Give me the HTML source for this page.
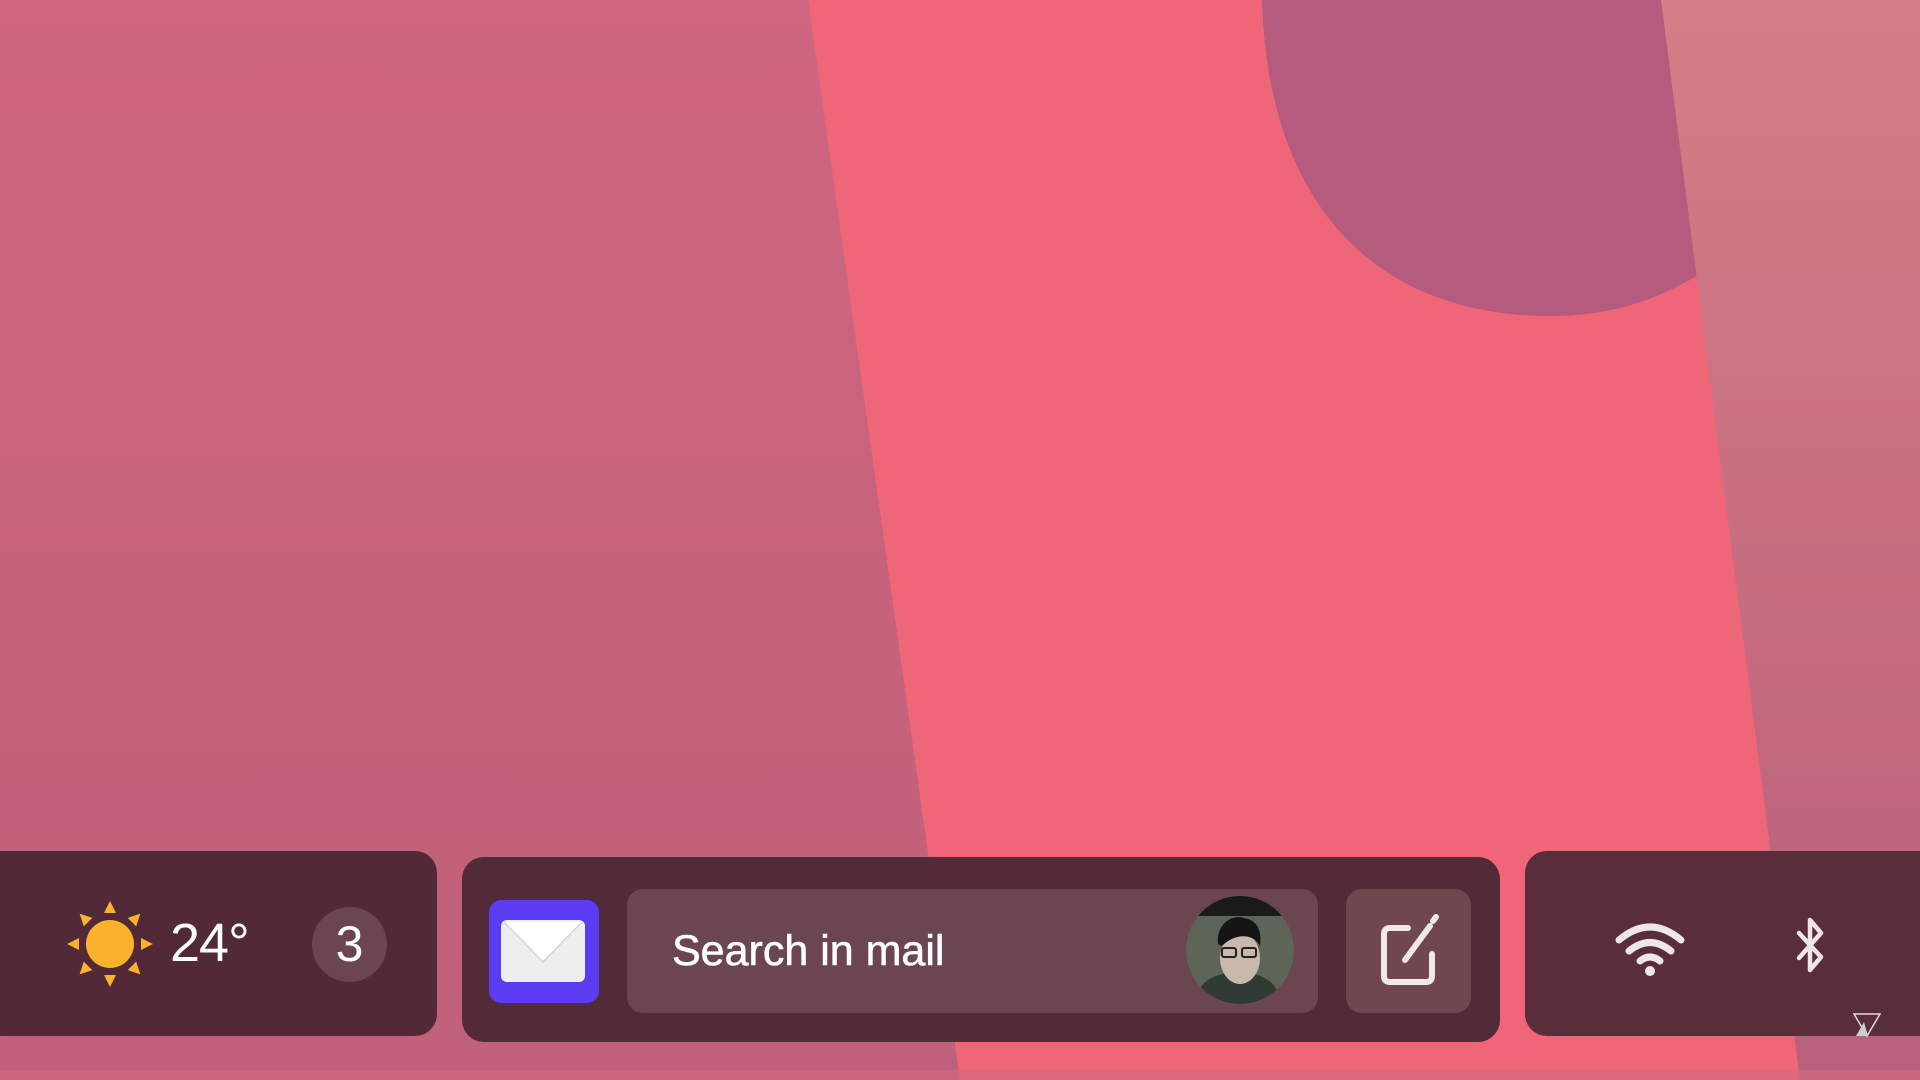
<!DOCTYPE html>
<html><head><meta charset="utf-8"><style>
html,body{margin:0;padding:0;width:1920px;height:1080px;overflow:hidden;font-family:"Liberation Sans",sans-serif}
.abs{position:absolute}
.panel{position:absolute;border-radius:22px}
</style></head><body>
<svg class="abs" style="left:0;top:0" width="1920" height="1080">
<defs>
<linearGradient id="lg" x1="0" y1="0" x2="0" y2="1"><stop offset="0" stop-color="#cf6580"/><stop offset="1" stop-color="#c0607a"/></linearGradient>
<linearGradient id="rg" x1="0" y1="0" x2="0" y2="1"><stop offset="0" stop-color="#d47f85"/><stop offset="0.6" stop-color="#c46b80"/><stop offset="1" stop-color="#b75f7c"/></linearGradient>
<clipPath id="band"><polygon points="808,0 1661,0 1800,1080 960,1080"/></clipPath>
</defs>
<rect width="1920" height="1080" fill="url(#lg)"/>
<rect x="1600" width="320" height="1080" fill="url(#rg)"/>
<polygon points="808,0 1661,0 1800,1080 960,1080" fill="#ee6678"/>
<g clip-path="url(#band)">
<path d="M1262 0 C1268 210 1380 316 1550 316 C1640 316 1700 280 1760 230 L1760 0 Z" fill="#b55b7d"/>
</g>
<rect x="0" y="1070" width="1920" height="10" fill="#d46a80" opacity="0.6"/>
</svg>

<div class="panel" style="left:-20px;top:851px;width:457px;height:185px;background:#522a37"></div>
<div class="panel" style="left:462px;top:857px;width:1038px;height:185px;background:#532a37"></div>
<div class="panel" style="left:1525px;top:851px;width:420px;height:185px;background:#5a2d3a"></div>

<!-- sun -->
<svg class="abs" style="left:66px;top:900px" width="88" height="88" viewBox="-44 -44 88 88">
<circle r="24" fill="#fbb12c"/>
<g fill="#fbb12c">
<polygon points="-6,-31 6,-31 0,-43"/>
<polygon points="-6,31 6,31 0,43"/>
<polygon points="-31,-6 -31,6 -43,0"/>
<polygon points="31,-6 31,6 43,0"/>
<g transform="rotate(45)"><polygon points="-6,-31 6,-31 0,-43"/><polygon points="-6,31 6,31 0,43"/><polygon points="-31,-6 -31,6 -43,0"/><polygon points="31,-6 31,6 43,0"/></g>
</g>
</svg>
<div class="abs" style="left:170px;top:913px;font-size:54px;color:#fff;line-height:60px;letter-spacing:-1px">24°</div>
<div class="abs" style="left:312px;top:907px;width:75px;height:75px;border-radius:50%;background:#6b4650;color:#fff;font-size:50px;line-height:75px;text-align:center">3</div>

<!-- mail icon -->
<div class="abs" style="left:489px;top:900px;width:110px;height:103px;border-radius:12px;background:#5b3cf0"></div>
<svg class="abs" style="left:500px;top:918px" width="88" height="68" viewBox="0 0 88 68">
<rect x="1" y="2" width="84" height="62" rx="6" fill="#eeeeee"/>
<path d="M4 4 L43 44 L82 4 Z" fill="#ffffff"/>
<path d="M4 4 L43 44 L82 4" fill="none" stroke="#d5d5d5" stroke-width="1.5"/>
</svg>

<!-- search -->
<div class="abs" style="left:627px;top:889px;width:691px;height:124px;border-radius:16px;background:#6b4550"></div>
<div class="abs" style="left:672px;top:925px;font-size:43px;color:#fff;line-height:52px;-webkit-text-stroke:0.6px #fff">Search in mail</div>
<svg class="abs" style="left:1186px;top:896px" width="108" height="108" viewBox="0 0 108 108">
<defs><clipPath id="av"><circle cx="54" cy="54" r="54"/></clipPath></defs>
<g clip-path="url(#av)">
<rect width="108" height="108" fill="#5d6559"/>
<rect width="108" height="20" fill="#1a1a1a"/>
<ellipse cx="52" cy="100" rx="40" ry="24" fill="#2f3b33"/>
<ellipse cx="54" cy="62" rx="20" ry="26" fill="#c9b9ac"/>
<path d="M32 48 C30 28 46 18 58 22 C72 24 76 36 74 50 C68 38 50 36 36 50 Z" fill="#151515"/>
<rect x="36" y="52" width="14" height="9" rx="2" fill="none" stroke="#222" stroke-width="2"/>
<rect x="56" y="52" width="14" height="9" rx="2" fill="none" stroke="#222" stroke-width="2"/>
</g>
</svg>

<!-- compose -->
<div class="abs" style="left:1346px;top:889px;width:125px;height:124px;border-radius:16px;background:#71474f"></div>
<svg class="abs" style="left:1378px;top:912px" width="66" height="76" viewBox="0 0 66 76">
<path d="M30 16 H12 Q6 16 6 22 V64 Q6 70 12 70 H48 Q54 70 54 64 V42" fill="none" stroke="#f1e8ea" stroke-width="6" stroke-linecap="round"/>
<path d="M27 48 L52 14" stroke="#f1e8ea" stroke-width="6" stroke-linecap="round"/>
<path d="M55 9 L58 5" stroke="#f1e8ea" stroke-width="6" stroke-linecap="round"/>
</svg>

<!-- wifi -->
<svg class="abs" style="left:1614px;top:920px" width="72" height="56" viewBox="0 0 72 56">
<g fill="none" stroke="#eee6e8" stroke-width="7" stroke-linecap="round">
<path d="M5 20 Q36 -6 67 20"/>
<path d="M15 31 Q36 14 57 31"/>
<path d="M26 41 Q36 33 46 41"/>
</g>
<circle cx="36" cy="51" r="5" fill="#eee6e8"/>
</svg>
<!-- bluetooth -->
<svg class="abs" style="left:1794px;top:914px" width="32" height="64" viewBox="0 0 32 64">
<path d="M5 19 L27 43 L16 56 V6 L27 19 L5 44" fill="none" stroke="#eee6e8" stroke-width="4.5" stroke-linejoin="round" stroke-linecap="round"/>
</svg>
<!-- watermark -->
<svg class="abs" style="left:1852px;top:1012px" width="30" height="26" viewBox="0 0 30 26">
<path d="M2 2 H28 L15 24 Z" fill="none" stroke="#ddd" stroke-width="1.5"/>
<path d="M4 24 L12 10 L16 24 Z" fill="#ccc"/>
</svg>
</body></html>
